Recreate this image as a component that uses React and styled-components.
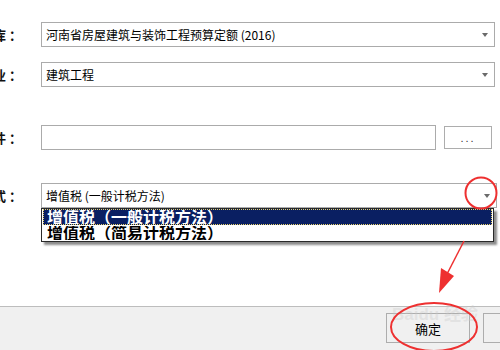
import React from "react";
import styled, { createGlobalStyle } from "styled-components";

const GlobalStyle = createGlobalStyle`
  html, body {
    margin: 0;
    padding: 0;
    background: #ffffff;
  }
  body {
    font-family: "Noto Sans CJK SC", "Liberation Sans", sans-serif;
  }
`;

const Page = styled.div`
  position: relative;
  width: 500px;
  height: 350px;
  overflow: hidden;
  display: flex;
  flex-direction: column;
  background: #ffffff;
`;

const Form = styled.div`
  flex: 1;
  display: flex;
  flex-direction: column;
  padding-top: 22px;
`;

const Row = styled.div`
  position: relative;
  display: flex;
  align-items: center;
  height: 25px;
  margin-top: ${(p) => p.gap || 0}px;
`;

const Label = styled.div`
  width: 41px;
  flex: none;
  overflow: hidden;
  display: flex;
  justify-content: flex-end;
  white-space: nowrap;
  font-size: 13px;
  font-weight: 700;
  color: #111;
  span {
    padding-right: 19px;
  }
`;

const Combo = styled.div`
  box-sizing: border-box;
  width: ${(p) => p.w}px;
  height: 25px;
  border: 1px solid #ababab;
  background: #fff;
  display: flex;
  align-items: center;
  padding: 0 5px 0 4px;
  font-size: 12px;
  color: #000;
  white-space: nowrap;
`;

const ComboText = styled.div`
  flex: 1;
  overflow: hidden;
`;

const Arrow = styled.div`
  width: 0;
  height: 0;
  border-left: 3.5px solid transparent;
  border-right: 3.5px solid transparent;
  border-top: 4px solid #6a6a6a;
  margin-right: 1px;
`;

const TextBox = styled.div`
  box-sizing: border-box;
  width: 395px;
  height: 25px;
  border: 1px solid #ababab;
  background: #fff;
`;

const DotsButton = styled.div`
  box-sizing: border-box;
  width: 48px;
  height: 23px;
  margin-left: 8px;
  border: 1px solid #adadad;
  background: #fff;
  display: flex;
  align-items: center;
  justify-content: center;
  font-size: 11px;
  letter-spacing: 2px;
  color: #333;
  font-family: "Liberation Sans", sans-serif;
`;

const DropList = styled.div`
  position: absolute;
  left: 41px;
  top: 25px;
  box-sizing: border-box;
  width: 453px;
  height: 34px;
  border: 1px solid #2a2a2a;
  background: #fff;
  box-shadow: 3px 3px 2px rgba(0, 0, 0, 0.45);
  padding: 0 1px;
  z-index: 2;
`;

const Option = styled.div`
  box-sizing: border-box;
  height: 16px;
  line-height: 13px;
  padding-left: 3px;
  font-size: 16px;
  font-weight: 700;
  white-space: nowrap;
  color: ${(p) => (p.active ? "#ffffff" : "#000000")};
  background: ${(p) => (p.active ? "#0a1f62" : "#ffffff")};
  border: 1px dotted ${(p) => (p.active ? "#e8d26a" : "transparent")};
  overflow: hidden;
`;

const Footer = styled.div`
  box-sizing: border-box;
  height: 44px;
  flex: none;
  border-top: 1px solid #bdbdbd;
  background: #f0f0f0;
  display: flex;
  align-items: flex-start;
  justify-content: flex-end;
  padding-top: 6px;
  gap: 13px;
  margin-right: -67px;
`;

const Button = styled.div`
  box-sizing: border-box;
  width: 84px;
  height: 30px;
  border: 1px solid #adadad;
  background: #f0f0f0;
  display: flex;
  align-items: center;
  justify-content: center;
  font-size: 13px;
  color: #000;
`;

const Watermark = styled.div`
  position: absolute;
  left: 392px;
  top: 300px;
  font-family: "Liberation Sans", "Noto Sans CJK SC", sans-serif;
  font-size: 17px;
  font-weight: 700;
  color: rgba(200, 200, 200, 0.35);
  pointer-events: none;
  white-space: nowrap;
`;

const Marks = styled.svg`
  position: absolute;
  left: 0;
  top: 0;
  width: 500px;
  height: 350px;
  pointer-events: none;
  z-index: 3;
`;

export default function App() {
  return (
    <>
      <GlobalStyle />
      <Page>
        <Form>
          <Row>
            <Label><span>定额库 ：</span></Label>
            <Combo w={454}>
              <ComboText>河南省房屋建筑与装饰工程预算定额 (2016)</ComboText>
              <Arrow />
            </Combo>
          </Row>
          <Row gap={15}>
            <Label><span>专业 ：</span></Label>
            <Combo w={454}>
              <ComboText>建筑工程</ComboText>
              <Arrow />
            </Combo>
          </Row>
          <Row gap={38}>
            <Label><span>模板文件 ：</span></Label>
            <TextBox />
            <DotsButton>...</DotsButton>
          </Row>
          <Row gap={33}>
            <Label><span>计税方式 ：</span></Label>
            <Combo w={456}>
              <ComboText>增值税 (一般计税方法)</ComboText>
              <Arrow />
            </Combo>
            <DropList>
              <Option active>增值税（一般计税方法）</Option>
              <Option>增值税（简易计税方法）</Option>
            </DropList>
          </Row>
        </Form>
        <Footer>
          <Button>确定</Button>
          <Button>取消</Button>
        </Footer>
        <Watermark>Baidu 经验</Watermark>
        <Marks viewBox="0 0 500 350">
          <circle cx="481" cy="193" r="15.5" fill="none" stroke="#ee3030" strokeWidth="2" />
          <ellipse cx="434" cy="327" rx="43" ry="24" fill="none" stroke="#ee3030" strokeWidth="2" />
          <line x1="464" y1="241" x2="446" y2="276" stroke="#ee3030" strokeWidth="1.5" />
          <polygon points="439,293 441,268 454,276" fill="#ee3030" />
        </Marks>
      </Page>
    </>
  );
}
